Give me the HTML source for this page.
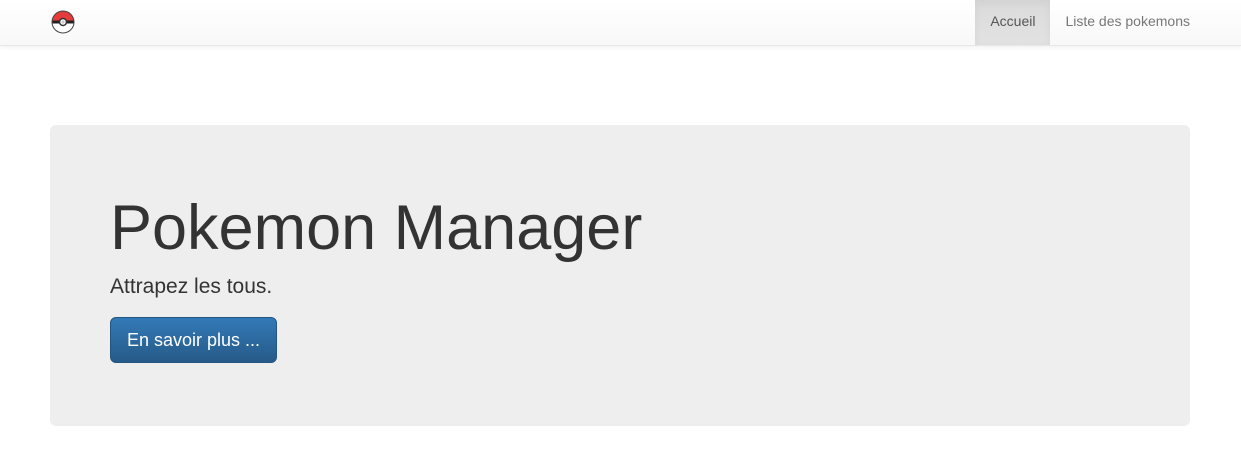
<!DOCTYPE html>
<html><head><style>
body{margin:0;font-family:"Liberation Sans",Arial,sans-serif;color:#333;background:#fff;width:1241px;height:468px;overflow:hidden}
.nav{height:45px;background:linear-gradient(#fff,#f8f8f8);border-bottom:1px solid #e7e7e7;box-shadow:0 1px 5px rgba(0,0,0,.07);position:relative}
.logo{position:absolute;left:51px;top:10px}
.links{position:absolute;right:36px;top:0;display:flex;height:45px}
.links a{display:block;padding:0 15px;line-height:42px;font-size:14px;color:#777;text-decoration:none}
.links a.act{background:linear-gradient(#dbdbdb,#e2e2e2);color:#555;box-shadow:inset 0 3px 9px rgba(0,0,0,.05)}
.jumbo{position:absolute;left:50px;top:125px;width:1140px;height:301px;background:#eee;border-radius:6px}
h1{position:absolute;left:60px;top:69px;margin:0;font-size:63px;font-weight:400;color:#333;line-height:1.1}
p{position:absolute;left:60px;top:150px;margin:0;font-size:21px;font-weight:300}
.btn{position:absolute;left:60px;top:192px;width:165px;height:44px;border:1px solid #245580;border-radius:6px;background:linear-gradient(#337ab7,#265a88);color:#fff;font-size:18px;line-height:44px;text-align:center}
</style></head><body>
<div class="nav">
<svg class="logo" width="24" height="24" viewBox="0 0 24 24"><path d="M1 12A11 11 0 0 1 23 12Z" fill="#e53b3b"/><path d="M1 12A11 11 0 0 0 23 12Z" fill="#fff"/><rect x="1" y="10.5" width="22" height="3" fill="#222"/><circle cx="12" cy="12" r="11" fill="none" stroke="#444" stroke-width="1"/><circle cx="12" cy="12" r="3.5" fill="#fff" stroke="#333" stroke-width="1.5"/><circle cx="12" cy="12" r="1.6" fill="#ccc"/></svg>
<div class="links"><a class="act" href="#">Accueil</a><a href="#">Liste des pokemons</a></div>
</div>
<div class="jumbo">
<h1>Pokemon Manager</h1>
<p>Attrapez les tous.</p>
<div class="btn">En savoir plus ...</div>
</div>
</body></html>
